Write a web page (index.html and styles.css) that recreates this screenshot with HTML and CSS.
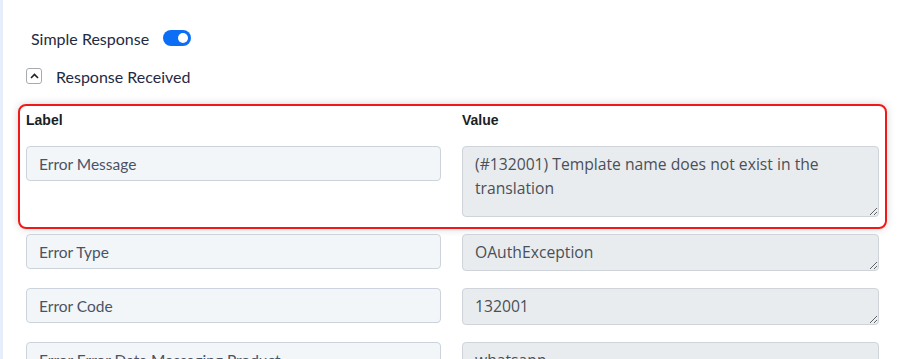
FILE: index.html
```html
<!DOCTYPE html>
<html lang="en">
<head>
    <meta charset="UTF-8">
    <meta name="viewport" content="width=device-width, initial-scale=1.0">
    <title>Response Received</title>
    <link rel="stylesheet" href="styles.css">
</head>
<body>
    <div class="page">
        <!-- 开关 -->
        <div class="simple">
            <span>Simple Response</span>
            <label class="switch">
                <input type="checkbox" checked>
                <i></i>
            </label>
        </div>

        <!-- 折叠标题 -->
        <div class="received">
            <button class="fold-btn">
                <svg width="9" height="6" viewBox="0 0 9 6"><path d="M1 5 L4.5 1.5 L8 5" fill="none" stroke="#222" stroke-width="1.6"/></svg>
            </button>
            <span>Response Received</span>
        </div>

        <!-- 字段列表 -->
        <div class="fields">
            <div class="row active">
                <div class="head">Label</div>
                <div class="head">Value</div>
                <input type="text" class="key" value="Error Message" readonly>
                <textarea class="val tall" readonly>(#132001) Template name does not exist in the translation</textarea>
            </div>
            <div class="row">
                <input type="text" class="key" value="Error Type" readonly>
                <textarea class="val" readonly>OAuthException</textarea>
            </div>
            <div class="row">
                <input type="text" class="key" value="Error Code" readonly>
                <textarea class="val" readonly>132001</textarea>
            </div>
            <div class="row">
                <input type="text" class="key" value="Error Error Data Messaging Product" readonly>
                <textarea class="val" readonly>whatsapp</textarea>
            </div>
        </div>
    </div>
</body>
</html>
```

FILE: styles.css
```css
body{
    margin: 0;
    background: #fff;
    font-family: Lato, "Open Sans", sans-serif;
}
.page{
    border-left: 3px solid #e6eefb;
    min-height: 359px;
    padding-top: 27px;
    box-sizing: border-box;
}

/* 开关 */
.simple{
    display: flex;
    align-items: center;
    gap: 14px;
    padding-left: 28px;
    height: 22px;
    font-size: 16px;
    color: #1f2a44;
}
.switch{
    position: relative;
    display: inline-block;
    width: 28px;
    height: 16px;
}
.switch input{
    display: none;
}
.switch i{
    position: absolute;
    inset: 0;
    border-radius: 8px;
    background: #0b6ef5;
}
.switch i::after{
    content: "";
    position: absolute;
    top: 3px;
    right: 3px;
    width: 10px;
    height: 10px;
    border-radius: 50%;
    background: #fff;
}

/* 折叠标题 */
.received{
    display: flex;
    align-items: center;
    gap: 14px;
    padding-left: 23px;
    margin-top: 18px;
    height: 18px;
    font-size: 16px;
    color: #1f2a44;
}
.fold-btn{
    width: 16px;
    height: 16px;
    padding: 0;
    border: 1px solid #a6abb3;
    border-radius: 3px;
    background: #fff;
    display: flex;
    align-items: center;
    justify-content: center;
}

/* 字段 */
.fields{
    padding: 0 26px 0 23px;
    margin-top: 19px;
}
.row{
    display: grid;
    grid-template-columns: 415px 417px;
    column-gap: 21px;
    align-items: start;
    margin-bottom: 17px;
}
.row.active{
    margin: 0 -8px 5px;
    padding: 4px 6px 10px;
    border: 2px solid #f01818;
    border-radius: 8px;
    box-shadow: 0 0 8px rgba(0, 0, 0, .16);
    row-gap: 16px;
}
.head{
    height: 20px;
    line-height: 20px;
    font-family: "Liberation Sans", Arial, sans-serif;
    font-weight: bold;
    font-size: 14px;
    color: #1b1e22;
}
.key,
.val{
    box-sizing: border-box;
    margin: 0;
    width: 100%;
    border-radius: 4px;
    line-height: 24px;
    outline: none;
}
.key{
    height: 35px;
    padding: 4px 12px;
    border: 1px solid #cdd3dc;
    background: #f3f6f9;
    color: #4a5365;
    font-family: Lato, "Open Sans", sans-serif;
    font-size: 15.5px;
}
.val{
    display: block;
    height: 37px;
    padding: 5px 12px;
    border: 1px solid #ced4da;
    background: #e9ecef;
    color: #495057;
    font-family: "Open Sans", "Liberation Sans", sans-serif;
    font-size: 15.7px;
    resize: vertical;
    overflow: hidden;
}
.val.tall{
    height: 71px;
}
```
